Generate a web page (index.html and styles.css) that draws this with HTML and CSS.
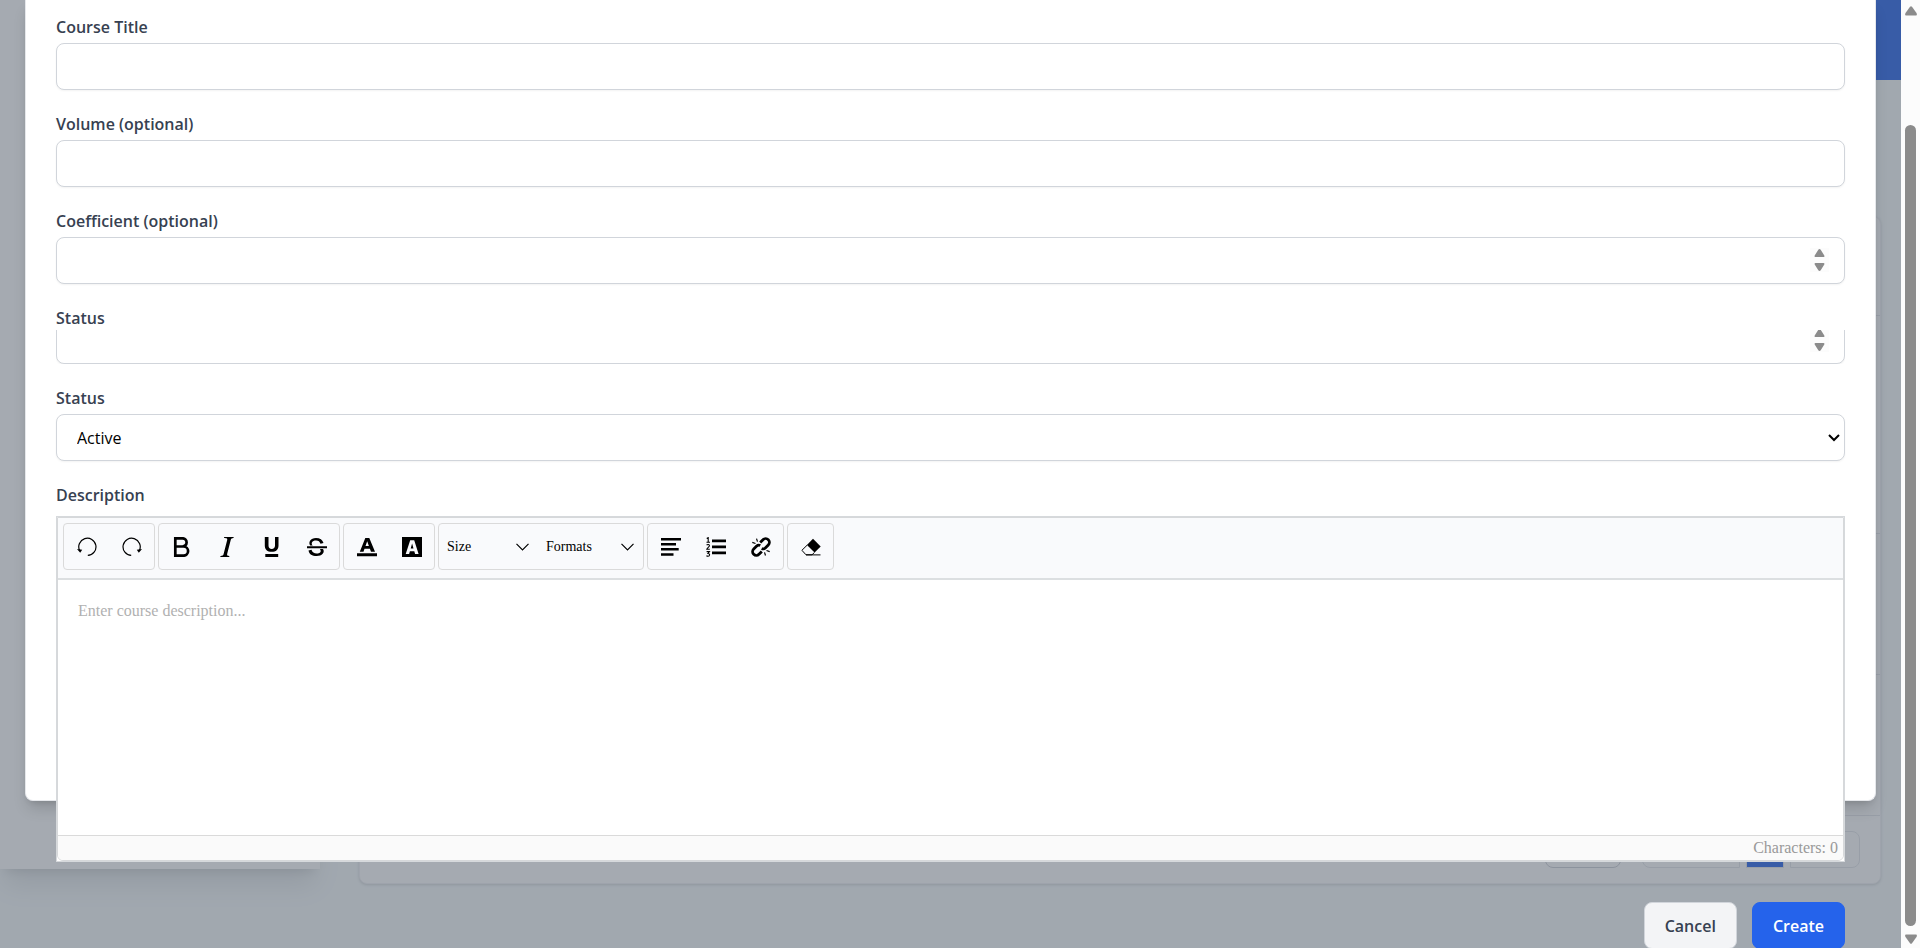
FILE: index.html
```html
<!DOCTYPE html>
<html lang="en">
<head>
<meta charset="utf-8">
<title>Create course</title>
<link rel="stylesheet" href="styles.css">
</head>
<body>
<div class="window">
  <div class="page">
    <div class="app" aria-hidden="true">
      <div class="sidebar"></div>
      <div class="main">
        <div class="topbar"></div>
        <div class="list-card">
          <div class="row row-head"></div>
          <div class="row row-tall"></div>
          <div class="row"></div>
          <div class="row"></div>
          <div class="pager">
            <span class="pager-size"></span>
            <span class="pager-prev"></span>
            <span class="pager-current"></span>
            <span class="pager-next"></span>
          </div>
        </div>
      </div>
    </div>

    <div class="overlay">
      <form class="modal">
        <div class="field">
          <label for="title">Course Title</label>
          <input class="control" id="title" type="text">
        </div>
        <div class="field">
          <label for="volume">Volume (optional)</label>
          <input class="control" id="volume" type="text">
        </div>
        <div class="field">
          <label for="coefficient">Coefficient (optional)</label>
          <div class="number">
            <input class="control" id="coefficient" type="number">
            <svg class="spinner" viewBox="0 0 19 24"><path d="M8.3 1.8Q9.5.4 10.7 1.8L14.3 7.4Q14.8 9 13.5 9H5.5Q4.2 9 4.7 7.4ZM8.3 22.2Q9.5 23.6 10.7 22.2L14.3 16.6Q14.8 15 13.5 15H5.5Q4.2 15 4.7 16.6Z"/></svg>
          </div>
        </div>
        <div class="field">
          <label for="coefficient-status">Status</label>
          <div class="number number-clipped">
            <input class="control" id="coefficient-status" type="number">
            <svg class="spinner" viewBox="0 0 19 24"><path d="M8.3 1.8Q9.5.4 10.7 1.8L14.3 7.4Q14.8 9 13.5 9H5.5Q4.2 9 4.7 7.4ZM8.3 22.2Q9.5 23.6 10.7 22.2L14.3 16.6Q14.8 15 13.5 15H5.5Q4.2 15 4.7 16.6Z"/></svg>
          </div>
        </div>
        <div class="field">
          <label for="status">Status</label>
          <div class="choice">
            <select class="control" id="status"><option>Active</option><option>Inactive</option></select>
            <svg class="chevron" viewBox="0 0 12 8"><path d="M1 1 6 6 11 1"/></svg>
          </div>
        </div>
        <div class="field field-editor">
          <label for="description">Description</label>
          <div class="editor">
            <div class="editor-frame">
              <div class="toolbar">
                <div class="group">
                  <button type="button" aria-label="Undo"><svg viewBox="0 0 20 20"><path class="thin" d="M2.6 13.5A8.6 8.6 0 1 1 10.8 18.4"/><path d="M0 12.1 5.2 12.7 3.2 15.7Z"/></svg></button>
                  <button type="button" aria-label="Redo"><svg viewBox="0 0 20 20"><path class="thin" d="M17.4 13.5A8.6 8.6 0 1 0 9.2 18.4"/><path d="M20 12.1 14.8 12.7 16.8 15.7Z"/></svg></button>
                </div>
                <div class="group">
                  <button type="button" aria-label="Bold"><svg viewBox="0 0 20 20"><path class="heavy" d="M3.3 1.3H10.5A4.1 4.1 0 0 1 10.5 9.5H3.3M3.3 9.5H11.5A4.6 4.6 0 0 1 11.5 18.7H3.3V0"/></svg></button>
                  <button type="button" aria-label="Italic"><svg viewBox="0 0 20 20"><path d="M7.2 0H16.7L16.5 1C14.6 1.1 14.2 1.4 13.8 2.8L10.2 16.8C9.8 18.5 10.2 18.9 12.4 19L12.2 20H3.3L3.5 19C5.6 18.9 6.2 18.5 6.6 17L10.2 3C10.5 1.4 10 1.1 7 1Z"/></svg></button>
                  <button type="button" aria-label="Underline"><svg viewBox="0 0 20 20"><path d="M2.8 0H6.5V8.5C6.5 10.8 7.7 11.9 9.7 11.9S13 10.8 13 8.5V0H16.5V8.5C16.5 12.6 14 14.8 9.7 14.8S2.8 12.6 2.8 8.5ZM3.3 17H16.2V20H3.3Z"/></svg></button>
                  <button type="button" aria-label="Strikethrough"><svg viewBox="0 0 20 20"><path d="M0 9.3H20V11.2H0ZM5.7 8.4H3.2C1 5.2 3.5.9 9 .9 13 .9 15.7 2.7 16.5 6L13.5 6.7C12.8 4.6 11.5 3.4 9 3.4 5 3.4 3.7 6.2 5.7 8.4ZM12.8 12H16C18.3 15.5 15 19 9.7 19 5 19 2.2 17.2 1.5 13.4L4.5 12.8C5.3 15.3 7 16.5 9.8 16.5 13.5 16.5 14.8 14.3 12.8 12Z"/></svg></button>
                </div>
                <div class="group">
                  <button type="button" aria-label="Font color"><svg viewBox="0 0 20 20"><path fill-rule="evenodd" d="M8.3 1H12.3L18 14.7H14L12.9 11.8H7.5L6.5 14.7H2.8ZM8.5 8.9H11.9L10.2 4.3ZM0 16.3H20V19.2H0Z"/></svg></button>
                  <button type="button" aria-label="Highlight color"><svg viewBox="0 0 20 20"><path fill-rule="evenodd" d="M0 0H20V20H0ZM8.2 3.2 3.7 17H7.1L7.9 14.2H12.3L13.1 17H16.6L12.2 3.2ZM8.7 11.5H11.5L10.1 6.5Z"/></svg></button>
                </div>
                <div class="group">
                  <button class="menu menu-size" type="button">Size<svg viewBox="0 0 13 8"><path class="thin" d="M.5.8 6.5 6.8 12.5.8"/></svg></button>
                  <button class="menu menu-formats" type="button">Formats<svg viewBox="0 0 13 8"><path class="thin" d="M.5.8 6.5 6.8 12.5.8"/></svg></button>
                </div>
                <div class="group">
                  <button type="button" aria-label="Align"><svg viewBox="0 0 20 20"><path d="M0 1H20V3.5H0ZM0 6H15V8.5H0ZM0 11H17.7V13.5H0ZM0 16.2H12.5V18.7H0Z"/></svg></button>
                  <button type="button" aria-label="Ordered list"><svg viewBox="0 0 20 20"><path d="M6 2.5H20V5.2H6ZM6 8.5H20V11.2H6ZM6 14.5H20V17.2H6Z"/><path class="digits" d="M.7 1.4 2.2.6V5.2M.5 5.2H4M.6 8.2C1.5 7 3.5 7.3 3.4 8.7 3.3 10 1.2 10.6.8 12.2H3.8M.6 14.6H3.4L2 16.4C4.2 16.4 4 19.3 2.1 19.3 1.3 19.3.8 19 .5 18.6"/></svg></button>
                  <button type="button" aria-label="Unlink"><svg viewBox="0 0 20 20"><path class="chain" d="M9.2 5.5 12 2.7A3.5 3.5 0 0 1 17.3 8L14.3 11C13.3 12 12 12.2 10.7 11.5M10.8 14.5 8 17.3A3.5 3.5 0 0 1 2.7 12L5.7 9C6.7 8 8 7.8 9.3 8.5"/><path class="sparks" d="M1.3 5.4 4.5 6.5M5.5 1.6 6.5 4.6M15.5 13.5 18.7 14.6M13.5 15.4 14.5 18.5"/></svg></button>
                </div>
                <div class="group">
                  <button type="button" aria-label="Remove format"><svg viewBox="0 0 20 20"><path d="M12 1.7 19.7 9.4 13.6 15.6 5.9 7.9Z"/><path class="outline" d="M6.1 8.2.9 13.3 5 17.8H11L13.5 15.4M5 17.9H19.5"/></svg></button>
                </div>
              </div>
              <textarea id="description" placeholder="Enter course description..."></textarea>
              <div class="counter">Characters: 0</div>
            </div>
          </div>
        </div>
        <div class="actions">
          <button class="action cancel" type="button">Cancel</button>
          <button class="action create" type="submit">Create</button>
        </div>
      </form>
    </div>
  </div>
  <div class="scrollbar" aria-hidden="true">
    <svg viewBox="0 0 12 10"><path d="M5 .8Q6 -.3 7 .8L11.5 7Q12.5 9.5 11 9.5H1Q-.5 9.5 .5 7Z"/></svg>
    <div class="track"><div class="thumb"></div></div>
    <svg viewBox="0 0 12 10"><path d="M5 9.2Q6 10.3 7 9.2L11.5 3Q12.5.5 11 .5H1Q-.5.5 .5 3Z"/></svg>
  </div>
</div>
</body>
</html>
```
FILE: styles.css
```css
*, *::before, *::after { box-sizing: border-box; }
body {
  margin: 0;
  font-family: "Segoe UI", "Open Sans", "Noto Sans", sans-serif;
  font-size: 16px;
  line-height: 24px;
  color: #374151;
}
button, input, select, textarea { font: inherit; color: inherit; margin: 0; }

.window { display: flex; height: 100vh; overflow: hidden; }
.page { position: relative; flex: 1; min-width: 0; overflow: hidden; background: #f6fafb; }

/* dimmed course list behind the dialog */
.app { display: flex; height: 100%; }
.sidebar {
  width: 320px;
  height: calc(100vh - 79px);
  background: #fff;
  box-shadow: 0 20px 25px -5px rgba(0, 0, 0, .1), 0 8px 10px -6px rgba(0, 0, 0, .1);
}
.main { flex: 1; display: flex; flex-direction: column; }
.topbar { height: 80px; background: #2563eb; }
.list-card {
  margin: 136px 20px 0 39px;
  border: 1px solid #f0f1f4;
  border-radius: 8px;
  background: #fff;
  box-shadow: 0 1px 3px rgba(0, 0, 0, .15);
}
.row { height: 141px; border-bottom: 1px solid #e5e7eb; }
.row-head { height: 99px; }
.row-tall { height: 218px; }
.pager { display: flex; justify-content: flex-end; padding: 15px 20px; }
.pager span { height: 37px; border: 1px solid #e5e7eb; }
.pager-size { width: 76px; margin-right: 21px; border-radius: 8px; }
.pager .pager-size { border-color: #cdd0d6; }
.pager-prev { width: 98px; margin-right: 6px; border-radius: 8px 0 0 8px; }
.pager-current { width: 38px; margin-right: 6px; background: #2563eb; }
.pager-next { width: 70px; border-radius: 0 8px 8px 0; }

.overlay {
  position: absolute;
  inset: 0;
  padding: 0 25px;
  overflow: hidden;
  background: rgba(75, 85, 99, .5);
}
.modal {
  height: calc(100vh - 147px);
  padding: 15px 30px 0;
  border: 1px solid #e5e7eb;
  border-top: 0;
  border-radius: 0 0 8px 8px;
  background: #fff;
  box-shadow: 0 10px 15px -3px rgba(0, 0, 0, .15), 0 4px 6px -4px rgba(0, 0, 0, .15);
}

.field { display: flex; flex-direction: column; gap: 4px; margin-bottom: 22px; }
.field label { font-weight: 600; }
.control {
  width: 100%;
  height: 47px;
  padding: 0 20px;
  border: 1px solid #d1d5db;
  border-radius: 8px;
  background: #fff;
  box-shadow: 0 1px 2px rgba(0, 0, 0, .05);
  color: #000;
}
.number { position: relative; display: flex; align-items: flex-end; }
.number-clipped { height: 34px; margin-top: -4px; overflow: hidden; }
.number .control { flex-shrink: 0; appearance: textfield; -moz-appearance: textfield; }
.control::-webkit-inner-spin-button { appearance: none; }
.spinner {
  position: absolute;
  right: 16px;
  bottom: 12px;
  width: 19px;
  height: 24px;
  background: #fcfcfc;
  fill: #8b8b8b;
}
.choice { position: relative; display: flex; }
.choice .control { appearance: none; }
.chevron {
  position: absolute;
  right: 5px;
  top: 20px;
  width: 12px;
  height: 8px;
  fill: none;
  stroke: #000;
  stroke-width: 2;
  pointer-events: none;
}

.field-editor { gap: 9px; margin-bottom: 40px; }
.editor { border: 1px solid #d6d9dc; background: #fff; }
.editor-frame {
  display: flex;
  flex-direction: column;
  border: 1px solid #d6d8da;
  border-radius: 0 0 6px 6px;
  overflow: hidden;
  font-family: "Liberation Serif", "Times New Roman", serif;
}
.toolbar {
  display: flex;
  flex-wrap: wrap;
  gap: 3px;
  padding: 5px 5px 8px;
  border-bottom: 2px solid #dcdfe1;
  background: #f9fafc;
}
.group { display: flex; border: 1px solid #dadada; border-radius: 4px; }
.group button {
  display: flex;
  align-items: center;
  justify-content: center;
  width: 45px;
  height: 45px;
  padding: 0;
  border: 0;
  background: none;
  color: #000;
}
.group svg { width: 20px; height: 20px; fill: #000; }
.group .thin { fill: none; stroke: #000; stroke-width: 1.2; }
.group .heavy { fill: none; stroke: #000; stroke-width: 2.7; }
.group .digits { fill: none; stroke: #000; stroke-width: 1.1; }
.group .chain { fill: none; stroke: #000; stroke-width: 2.8; }
.group .sparks { fill: none; stroke: #000; stroke-width: 1.2; }
.group .outline { fill: none; stroke: #000; stroke-width: 1; }
.group .menu {
  justify-content: space-between;
  padding: 0 9px 0 8px;
  font-size: 14px;
}
.group .menu svg { width: 13px; height: 8px; }
.group .menu-size { width: 99px; }
.group .menu-formats { width: 105px; }
.editor textarea {
  display: block;
  height: 255px;
  padding: 19px 20px;
  border: 0;
  resize: none;
  outline: 0;
  background: #fff;
  font-size: 16px;
}
.editor textarea::placeholder { color: #b1b1b1; }
.counter {
  height: 25px;
  padding: 0 5px;
  border-top: 1px solid #dadada;
  background: #fafafa;
  font-size: 16px;
  text-align: right;
  color: #999;
}

.actions { display: flex; justify-content: flex-end; gap: 15px; }
.action {
  height: 47px;
  padding: 0 20px;
  border: 1px solid #d1d5db;
  border-radius: 8px;
  font-weight: 600;
}
.cancel { background: #f3f4f6; }
.create { border-color: #2563eb; background: #2563eb; color: #fff; }

.scrollbar {
  display: flex;
  flex-direction: column;
  align-items: center;
  width: 19px;
  padding: 6px 0 4px;
  background: #fcfcfc;
}
.scrollbar svg { width: 12px; height: 10px; fill: #8b8b8b; }
.track { flex: 1; width: 11px; padding: 109px 0 8px; }
.thumb { height: 100%; border-radius: 6px; background: #8b8b8b; }
```
